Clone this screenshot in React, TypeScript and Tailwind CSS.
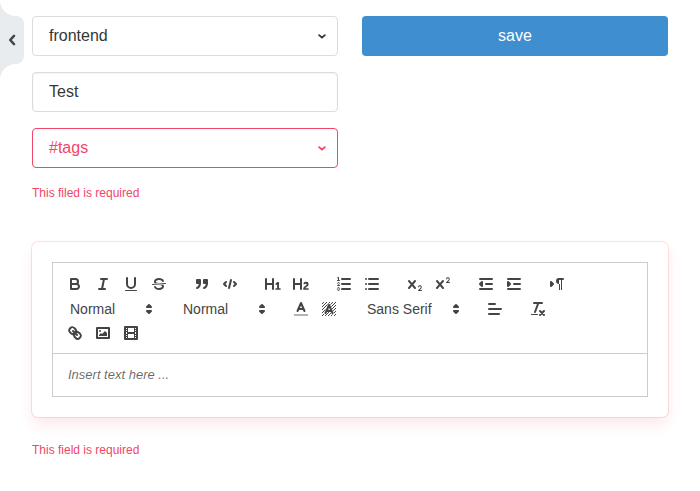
import type { ReactNode } from "react";

const Glyph = ({ children }: { children: ReactNode }) => (
  <svg viewBox="0 0 18 18" className="block size-[18px] shrink-0" fill="none" stroke="#444" strokeWidth="2" strokeLinecap="round" strokeLinejoin="round">
    {children}
  </svg>
);

const Tool = ({ label, children }: { label: string; children: ReactNode }) => (
  <button type="button" aria-label={label} className="flex h-6 w-7 items-center justify-center">
    <Glyph>{children}</Glyph>
  </button>
);

const Group = ({ children }: { children: ReactNode }) => <div className="mr-[15px] flex">{children}</div>;

const solid = { fill: "#444", stroke: "none" };

const Picker = ({ label, wide = false }: { label: string; wide?: boolean }) => (
  <div className={`flex h-6 items-center justify-between pl-[9px] pr-px text-sm text-[#444] ${wide ? "w-[108px]" : "w-[98px]"}`}>
    <span>{label}</span>
    <Glyph>
      <polygon points="7 11 9 13 11 11 7 11" />
      <polygon points="7 7 9 5 11 7 7 7" />
    </Glyph>
  </div>
);

const crossPath =
  "M9.65,5.241a1,1,0,0,0-1.409.108L6,7.964,3.759,5.349A1,1,0,0,0,2.192,6.59178Q2.21541,6.6213,2.241,6.649L4.684,9.5,2.241,12.35A1,1,0,0,0,3.71,13.70722q0.02557-.02768.049-0.05722L6,11.036,8.241,13.65a1,1,0,1,0,1.567-1.24277Q9.78459,12.3777,9.759,12.35L7.316,9.5,9.759,6.651A1,1,0,0,0,9.65,5.241Z";

// Cells of the diagonal hatching behind the highlight icon.
const hatch = Array.from({ length: 196 }, (_, i) => [2 + (i % 14), 2 + Math.floor(i / 14)]).filter(([x, y]) => (x + y) % 3 === 2);

const Chevron = () => (
  <svg viewBox="0 0 8 5" className="mr-[3px] h-[5px] w-2" fill="none" stroke="currentColor" strokeWidth="1.8" strokeLinecap="round" strokeLinejoin="round">
    <path d="M1.1 1.1L4 3.7l2.9-2.6" />
  </svg>
);

const Toolbar = () => (
  <div className="border border-[#ccc] px-2 pt-[9px] pb-2">
    <div className="flex h-6">
      <Group>
        <Tool label="Bold">
          <path d="M5,4H9.5A2.5,2.5,0,0,1,12,6.5v0A2.5,2.5,0,0,1,9.5,9H5V4Z" />
          <path d="M5,9h5.5A2.5,2.5,0,0,1,13,11.5v0A2.5,2.5,0,0,1,10.5,14H5V9Z" />
        </Tool>
        <Tool label="Italic"><path d="M7 4H13M5 14H11M8 14L10 4" /></Tool>
        <Tool label="Underline">
          <path d="M5,3V9a4.012,4.012,0,0,0,4,4H9a4.012,4.012,0,0,0,4-4V3" />
          <rect {...solid} x="3" y="15" width="12" height="1" rx=".5" />
        </Tool>
        <Tool label="Strike">
          <path strokeWidth="1" d="M15.5 8.5L2.5 9.5" />
          <path {...solid} d="M9.007,8C6.542,7.791,6,7.519,6,6.5,6,5.792,7.283,5,9,5c1.571,0,2.765.679,2.969,1.309a1,1,0,0,0,1.9-.617C13.356,4.106,11.354,3,9,3,6.2,3,4,4.538,4,6.5a3.2,3.2,0,0,0,.5,1.843Z" />
          <path {...solid} d="M8.984,10C11.457,10.208,12,10.479,12,11.5c0,0.708-1.283,1.5-3,1.5-1.571,0-2.765-.679-2.969-1.309a1,1,0,1,0-1.9.617C4.644,13.894,6.646,15,9,15c2.8,0,5-1.538,5-3.5a3.2,3.2,0,0,0-.5-1.843Z" />
        </Tool>
      </Group>
      <Group>
        <Tool label="Quote">
          <g fill="#444">
            <rect x="4" y="5" width="3" height="3" />
            <rect x="11" y="5" width="3" height="3" />
            <path d="M7,8c0,4.031-3,5-3,5" />
            <path d="M14,8c0,4.031-3,5-3,5" />
          </g>
        </Tool>
        <Tool label="Code"><path d="M5 7L3 9L5 11M13 7L15 9L13 11M10 5L8 13" /></Tool>
      </Group>
      <Group>
        <Tool label="Heading 1">
          <path {...solid} d="M10,4V14a1,1,0,0,1-2,0V10H3v4a1,1,0,0,1-2,0V4A1,1,0,0,1,3,4V8H8V4a1,1,0,0,1,2,0Zm6.06787,9.209H14.98975V7.59863a.54085.54085,0,0,0-.605-.60547h-.62744a1.01119,1.01119,0,0,0-.748.29688L11.645,8.56641a.5435.5435,0,0,0-.022.8584l.28613.30762a.53861.53861,0,0,0,.84717.0332l.09912-.08789a1.2137,1.2137,0,0,0,.2417-.35254h.02246s-.01123.30859-.01123.60547V13.209H12.041a.54085.54085,0,0,0-.605.60547v.43945a.54085.54085,0,0,0,.605.60547h4.02686a.54085.54085,0,0,0,.605-.60547v-.43945A.54085.54085,0,0,0,16.06787,13.209Z" />
        </Tool>
        <Tool label="Heading 2">
          <path {...solid} d="M16.73975,13.81445v.43945a.54085.54085,0,0,1-.605.60547H11.855a.58392.58392,0,0,1-.64893-.60547V14.0127c0-2.90527,3.39941-3.42187,3.39941-4.55469a.77675.77675,0,0,0-.84717-.78125,1.17684,1.17684,0,0,0-.83594.38477c-.2749.26367-.561.374-.85791.13184l-.4292-.34082c-.30811-.24219-.38525-.51758-.1543-.81445a2.97155,2.97155,0,0,1,2.45361-1.17676,2.45393,2.45393,0,0,1,2.68408,2.40918c0,2.45312-3.1792,2.92676-3.27832,3.93848h2.79443A.54085.54085,0,0,1,16.73975,13.81445ZM9,3A.99974.99974,0,0,0,8,4V8H3V4A1,1,0,0,0,1,4V14a1,1,0,0,0,2,0V10H8v4a1,1,0,0,0,2,0V4A.99974.99974,0,0,0,9,3Z" />
        </Tool>
      </Group>
      <Group>
        <Tool label="Ordered list">
          <path d="M7 4H15M7 9H15M7 14H15" />
          <g strokeWidth="1">
            <path d="M2.5 5.5H4.5M4.5,10.5h-2c0-.234,1.85-1.076,1.85-2.234A0.959,0.959,0,0,0,2.5,8.156" />
            <path d="M2.5,14.846a0.959,0.959,0,0,0,1.85-.109A0.7,0.7,0,0,0,3.75,14a0.688,0.688,0,0,0,.6-0.736,0.959,0.959,0,0,0-1.85-.109" />
          </g>
          <path {...solid} d="M3.5,6A0.5,0.5,0,0,1,3,5.5V3.085l-0.276.138A0.5,0.5,0,0,1,2.053,3c-0.124-.247-0.023-0.324.224-0.447l1-.5A0.5,0.5,0,0,1,4,2.5v3A0.5,0.5,0,0,1,3.5,6Z" />
        </Tool>
        <Tool label="Bullet list"><path d="M6 4H15M6 9H15M6 14H15M3 4H3M3 9H3M3 14H3" /></Tool>
      </Group>
      <Group>
        <Tool label="Subscript">
          <path {...solid} d="M15.5,15H13.861a3.858,3.858,0,0,0,1.914-2.975,1.8,1.8,0,0,0-1.6-1.751A1.921,1.921,0,0,0,12.021,11.7a0.50013,0.50013,0,1,0,.957.291h0a0.914,0.914,0,0,1,1.053-.725,0.81,0.81,0,0,1,.744.762c0,1.076-1.16971,1.86982-1.93971,2.43082A1.45639,1.45639,0,0,0,12,15.5a0.5,0.5,0,0,0,.5.5h3A0.5,0.5,0,0,0,15.5,15Z" />
          <path {...solid} d={crossPath} />
        </Tool>
        <Tool label="Superscript">
          <path {...solid} d="M15.5,7H13.861a4.015,4.015,0,0,0,1.914-2.975,1.8,1.8,0,0,0-1.6-1.751A1.922,1.922,0,0,0,12.021,3.7a0.5,0.5,0,1,0,.957.291,0.917,0.917,0,0,1,1.053-.725,0.81,0.81,0,0,1,.744.762c0,1.077-1.164,1.925-1.934,2.486A1.423,1.423,0,0,0,12,7.5a0.5,0.5,0,0,0,.5.5h3A0.5,0.5,0,0,0,15.5,7Z" />
          <path {...solid} d={crossPath} />
        </Tool>
      </Group>
      <Group>
        <Tool label="Outdent">
          <path d="M3 14H15M3 4H15M9 9H15" />
          <polyline fill="#444" points="5 7 5 11 3 9 5 7" />
        </Tool>
        <Tool label="Indent">
          <path d="M3 14H15M3 4H15M9 9H15" />
          <polyline fill="#444" points="3 7 3 11 5 9 3 7" />
        </Tool>
      </Group>
      <Group>
        <Tool label="Direction">
          <polygon fill="#444" points="3 11 5 9 3 7 3 11" />
          <path d="M15 4H11" />
          <path {...solid} d="M11,3a3,3,0,0,0,0,6h1V3H11ZM11 4h1v11h-1ZM13 4h1v11h-1Z" />
        </Tool>
      </Group>
    </div>
    <div className="mt-px flex h-6">
      <Group><Picker label="Normal" /></Group>
      <Group><Picker label="Normal" /></Group>
      <Group>
        <Tool label="Text color">
          <path opacity=".4" strokeLinecap="square" d="M3 15H15" />
          <path d="M5.5 11L9 3L12.5 11M11.63 9H6.38" />
        </Tool>
        <Tool label="Highlight">
          {hatch.map(([x, y]) => <rect key={`${x}-${y}`} {...solid} x={x} y={y} width="1" height="1" />)}
          <path stroke="#fff" strokeWidth="3" d="M5.5 13L9 5L12.5 13" />
          <path d="M5.5 13L9 5L12.5 13M11.63 11H6.38" />
        </Tool>
      </Group>
      <Group><Picker label="Sans Serif" wide /></Group>
      <Group><Tool label="Align"><path d="M3 9H15M3 14H13M3 4H9" /></Tool></Group>
      <Group>
        <Tool label="Clear formatting">
          <path d="M5 3H13M6 12L9.35 3" />
          <path d="M11 11L15 15M15 11L11 15" />
          <rect {...solid} x="2" y="14" width="7" height="1" rx=".5" />
        </Tool>
      </Group>
    </div>
    <div className="flex h-6">
      <Tool label="Link">
        <path d="M7 7L11 11M8.9,4.577a3.476,3.476,0,0,1,.36,4.679A3.476,3.476,0,0,1,4.577,8.9C3.185,7.5,2.035,6.4,4.217,4.217S7.5,3.185,8.9,4.577Z" />
        <path d="M13.423,9.1a3.476,3.476,0,0,0-4.679-.36,3.476,3.476,0,0,0,.36,4.679c1.392,1.392,2.5,2.542,4.679.36S14.815,10.5,13.423,9.1Z" />
      </Tool>
      <Tool label="Image">
        <rect x="3" y="4" width="12" height="10" />
        <circle {...solid} cx="6" cy="7" r="1" />
        <polyline {...solid} points="5 12 5 11 7 9 8 10 11 7 13 9 13 12 5 12" />
      </Tool>
      <Tool label="Video">
        <rect x="3" y="3" width="12" height="12" />
        <path {...solid} d="M5 3h1v12h-1ZM12 3h1v12h-1ZM5 8h8v2h-8ZM3 5h3v1h-3ZM3 7h3v1h-3ZM3 10h3v1h-3ZM3 12h3v1h-3ZM12 5h3v1h-3ZM12 7h3v1h-3ZM12 10h3v1h-3ZM12 12h3v1h-3Z" />
      </Tool>
    </div>
  </div>
);

export default function App() {
  return (
    <div className="flex h-[491px] bg-white font-['Liberation_Sans',Arial,sans-serif] text-base text-[#363636]">
      <aside className="w-8 shrink-0">
        <div className="h-4 w-4 bg-[radial-gradient(circle_at_100%_0,transparent_15.5px,#e9ecef_16.5px)]" />
        <button type="button" aria-label="Collapse" className="flex h-12 w-6 items-center justify-center rounded-r-lg bg-[#e9ecef]">
          <svg viewBox="0 0 8 12" className="h-3 w-2" fill="none" stroke="#444" strokeWidth="2.5" strokeLinecap="round" strokeLinejoin="round">
            <path d="M6 1.9L2.2 6L6 10.1" />
          </svg>
        </button>
        <div className="h-4 w-4 bg-[radial-gradient(circle_at_100%_100%,transparent_15.5px,#e9ecef_16.5px)]" />
      </aside>
      <main className="w-[636px] pt-4">
        <div className="grid grid-cols-2 gap-6">
          <div className="flex flex-col gap-4">
            <div className="flex h-10 items-center justify-between rounded border border-[#dbdbdb] px-4 pr-2">
              <span>frontend</span><Chevron />
            </div>
            <div className="flex h-10 items-center rounded border border-[#dbdbdb] px-4 shadow-[inset_0_1px_2px_rgba(10,10,10,0.05)]">Test</div>
            <div className="flex h-10 items-center justify-between rounded border border-[#f14668] px-4 pr-2 text-[#f14668]">
              <span>#tags</span><Chevron />
            </div>
          </div>
          <button type="button" className="h-10 rounded bg-[#3e8ed0] text-white">save</button>
        </div>
        <p className="mt-4 text-xs leading-[18px] text-[#f14668]">This filed is required</p>
        <section className="mt-10 h-[175px] rounded-md p-5 shadow-[0_8px_16px_-2px_rgba(255,40,60,0.13),0_0_0_1px_rgba(255,56,56,0.15)]">
          <Toolbar />
          <div className="h-[43px] border border-t-0 border-[#ccc] px-[15px] py-3 text-[13px] leading-[18px] text-black/60 italic">Insert text here ...</div>
        </section>
        <p className="mt-6 text-xs leading-[18px] text-[#f14668]">This field is required</p>
      </main>
    </div>
  );
}
